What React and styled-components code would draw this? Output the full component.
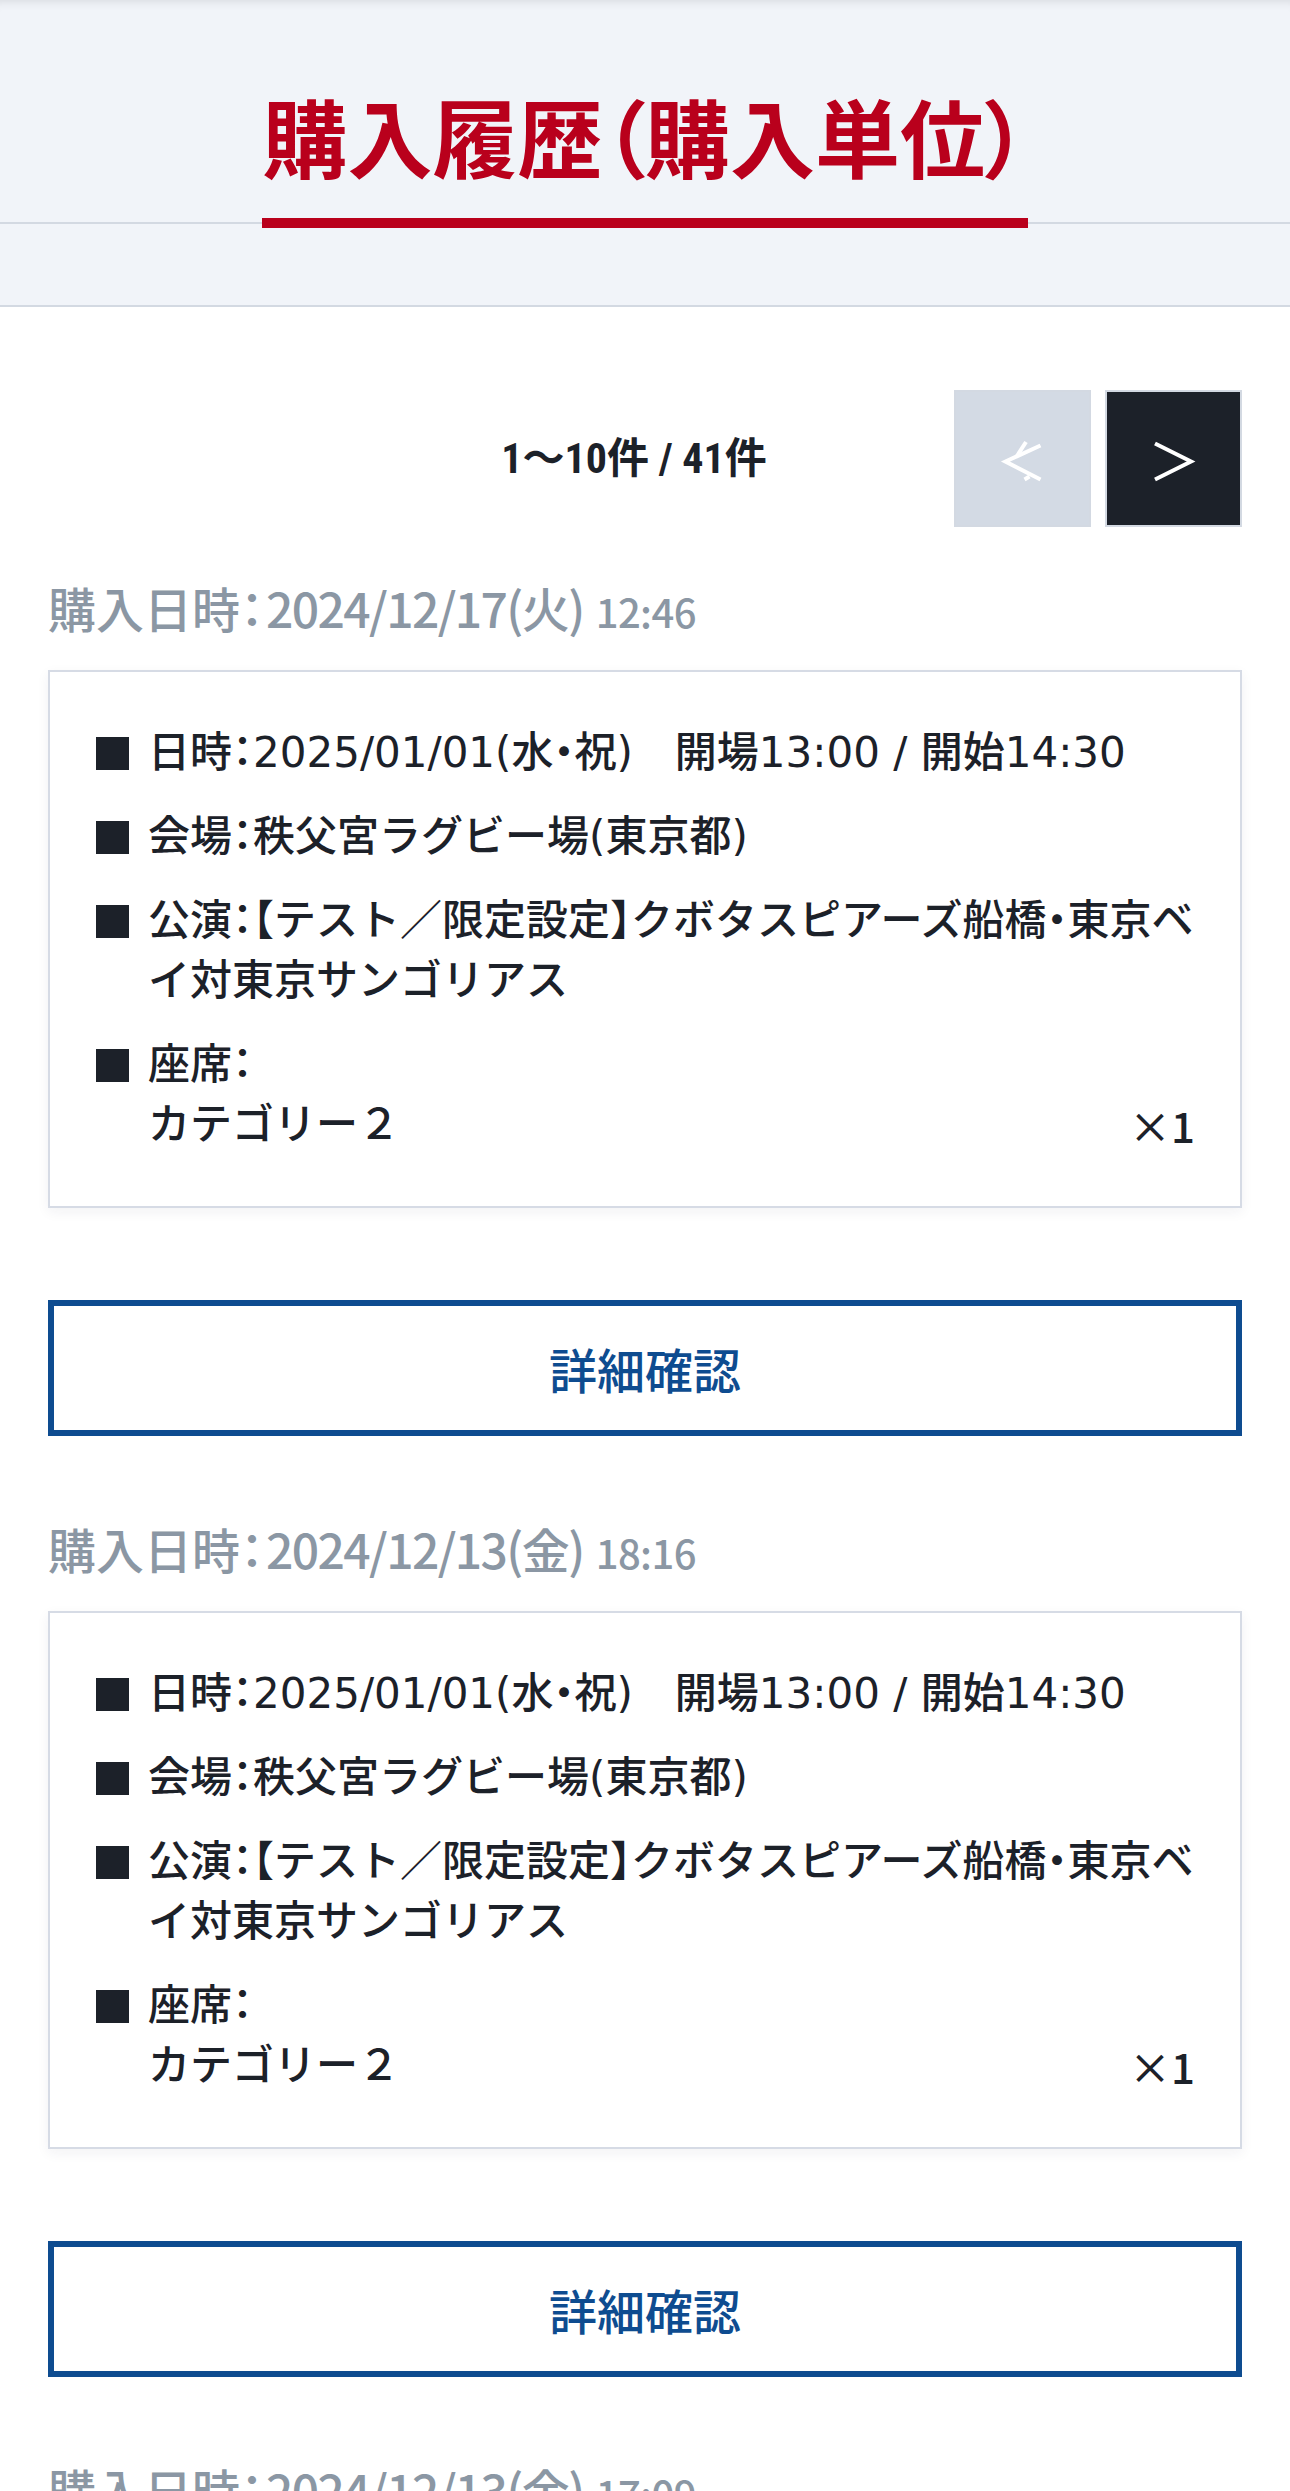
import React from "react";
import styled, { createGlobalStyle } from "styled-components";

const GlobalStyle = createGlobalStyle`
  html, body {
    margin: 0;
    padding: 0;
    background: #fff;
    overflow: hidden;
  }
  body {
    font-family: "Noto Sans CJK JP", "Noto Sans", sans-serif;
    color: #1c2129;
  }
`;

const Header = styled.header`
  background: #f1f4f9;
  border-bottom: 2px solid #d3d9e2;
  box-shadow: inset 0 10px 10px -8px rgba(0, 0, 0, 0.1);
`;

const TitleBar = styled.div`
  display: flex;
  justify-content: center;
  align-items: flex-end;
  padding-top: 71px;
  border-bottom: 2px solid #d3d9e2;
`;

const Title = styled.h1`
  margin: 0 0 -6px;
  padding-bottom: 19px;
  border-bottom: 10px solid #b9001c;
  font-size: 85px;
  font-weight: 700;
  line-height: 128px;
  color: #b9001c;
  font-feature-settings: "palt";
`;

const HeaderSpacer = styled.div`
  height: 81px;
`;

const Main = styled.main`
  padding: 83px 48px 0;
`;

const Pager = styled.div`
  display: grid;
  grid-template-columns: 1fr auto 1fr;
  align-items: center;
  height: 137px;
  margin-bottom: 47px;
`;

const PageCount = styled.div`
  grid-column: 2;
  font-family: "Roboto Condensed", "Noto Sans CJK JP", sans-serif;
  font-size: 42px;
  font-weight: 700;
  line-height: 1;
  margin-left: -22px;
  font-feature-settings: "palt";
`;

const PageButtons = styled.div`
  grid-column: 3;
  justify-self: end;
  display: flex;
  gap: 14px;
`;

const PageButton = styled.button`
  width: 137px;
  height: 137px;
  box-sizing: border-box;
  border: 2px solid #d3d9e2;
  background: ${(p) => (p.$disabled ? "#d3dae4" : "#1c2129")};
  display: flex;
  align-items: center;
  justify-content: center;
  padding: 0;
  cursor: ${(p) => (p.$disabled ? "default" : "pointer")};
`;

const PurchasedAt = styled.h2`
  margin: 0 0 30px;
  font-size: 48px;
  font-weight: 500;
  line-height: 66px;
  color: #8b97a4;
  font-feature-settings: "halt";
`;

const DateText = styled.span`
  margin-left: 2px;
  letter-spacing: -1.6px;
`;

const Time = styled.span`
  font-size: 40px;
  line-height: 1;
  margin-left: 12px;
  letter-spacing: -0.6px;
`;

const Card = styled.div`
  border: 2px solid #d6dbe5;
  padding: 51px 40px 51px 46px;
  box-shadow: 0 4px 12px rgba(30, 40, 60, 0.06);
`;

const InfoList = styled.ul`
  list-style: none;
  margin: 0;
  padding: 0;
  display: flex;
  flex-direction: column;
  gap: 24px;
`;

const InfoItem = styled.li`
  display: flex;
  align-items: flex-start;
`;

const Bullet = styled.span`
  flex-shrink: 0;
  width: 33px;
  height: 33px;
  margin: 14px 19px 0 0;
  background: #1c2129;
`;

const ItemBody = styled.div`
  flex: 1;
  font-family: "DejaVu Sans", "Noto Sans CJK JP", sans-serif;
  font-size: 42px;
  font-weight: 500;
  line-height: 60px;
  font-feature-settings: "halt";
`;

const SeatLine = styled.div`
  display: flex;
  justify-content: space-between;
`;

const Quantity = styled.span`
  margin-right: 5px;
  font-family: "Noto Sans CJK JP", sans-serif;
`;

const DetailButton = styled.button`
  display: block;
  width: 100%;
  height: 136px;
  box-sizing: border-box;
  margin: 92px 0 79px;
  border: 6px solid #0e4c90;
  background: #fff;
  color: #0e4c90;
  font-family: inherit;
  font-size: 48px;
  font-weight: 500;
  cursor: pointer;
`;

const PrevIcon = () => (
  <svg width="48" height="48" viewBox="0 0 48 48" fill="none" stroke="#fff" strokeWidth="4">
    <polyline points="41.5,10.5 6.5,26.5 41.5,44.5" />
    <line x1="27" y1="7" x2="18" y2="21" />
    <line x1="25.5" y1="44.5" x2="30.5" y2="41.5" />
  </svg>
);

const NextIcon = () => (
  <svg width="48" height="48" viewBox="0 0 48 48" fill="none" stroke="#fff" strokeWidth="4">
    <polyline points="5,8.5 41,26.5 5,44.5" />
  </svg>
);

const purchases = [
  { date: "2024/12/17(火)", time: "12:46" },
  { date: "2024/12/13(金)", time: "18:16" },
  { date: "2024/12/13(金)", time: "17:09" },
];

const PurchaseCard = ({ date, time }) => (
  <section>
    <PurchasedAt>
      購入日時：<DateText>{date}</DateText>
      <Time>{time}</Time>
    </PurchasedAt>
    <Card>
      <InfoList>
        <InfoItem>
          <Bullet />
          <ItemBody>日時：2025/01/01(水・祝)　開場13:00 / 開始14:30</ItemBody>
        </InfoItem>
        <InfoItem>
          <Bullet />
          <ItemBody>会場：秩父宮ラグビー場(東京都)</ItemBody>
        </InfoItem>
        <InfoItem>
          <Bullet />
          <ItemBody>
            公演：【テスト／限定設定】クボタスピアーズ船橋・東京ベイ対東京サンゴリアス
          </ItemBody>
        </InfoItem>
        <InfoItem>
          <Bullet />
          <ItemBody>
            座席：
            <SeatLine>
              <span>カテゴリー２</span>
              <Quantity>×1</Quantity>
            </SeatLine>
          </ItemBody>
        </InfoItem>
      </InfoList>
    </Card>
    <DetailButton>詳細確認</DetailButton>
  </section>
);

const App = () => (
  <>
    <GlobalStyle />
    <Header>
      <TitleBar>
        <Title>購入履歴（購入単位）</Title>
      </TitleBar>
      <HeaderSpacer />
    </Header>
    <Main>
      <Pager>
        <PageCount>1〜10件 / 41件</PageCount>
        <PageButtons>
          <PageButton $disabled aria-label="前へ">
            <PrevIcon />
          </PageButton>
          <PageButton aria-label="次へ">
            <NextIcon />
          </PageButton>
        </PageButtons>
      </Pager>
      {purchases.map((p, i) => (
        <PurchaseCard key={i} {...p} />
      ))}
    </Main>
  </>
);

export default App;
